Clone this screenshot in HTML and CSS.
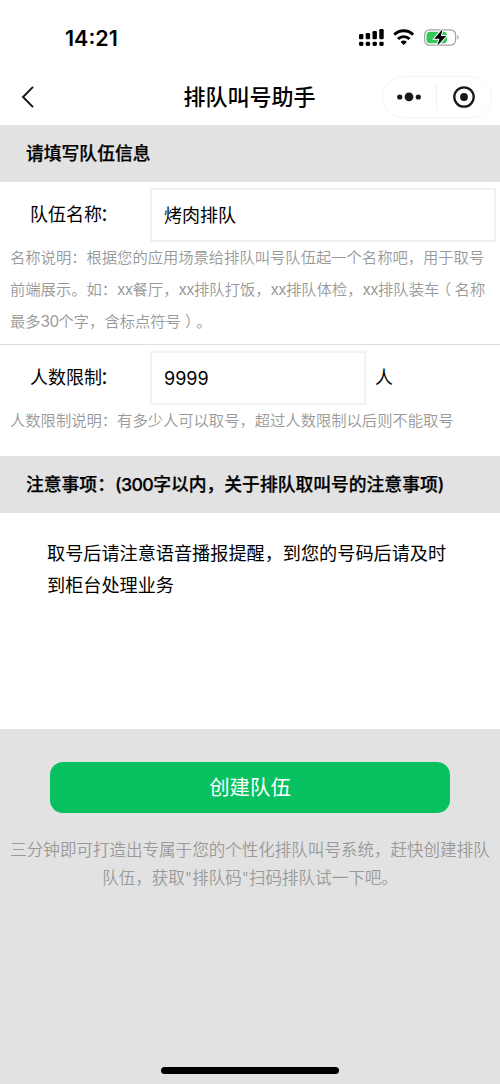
FILE: index.html
```html
<!DOCTYPE html>
<html lang="zh-CN">
<head>
<meta charset="utf-8">
<title>排队叫号助手</title>
<link rel="stylesheet" href="styles.css">
</head>
<body>
<div class="app">
  <header class="status-bar">
    <span class="clock">14:21</span>
    <svg class="status-icons" width="102" height="20" viewBox="0 0 102 20">
      <g fill="#000">
        <rect x="1" y="6" width="4.4" height="5.2" rx="1.3"/>
        <rect x="7.7" y="5" width="4.4" height="6.2" rx="1.3"/>
        <rect x="14.5" y="3" width="4.4" height="8.2" rx="1.3"/>
        <rect x="21.3" y="1" width="4.4" height="10.2" rx="1.3"/>
        <rect x="1" y="13.7" width="4.4" height="4.3" rx="1.4"/>
        <rect x="7.7" y="13.7" width="4.4" height="4.3" rx="1.4"/>
        <rect x="14.5" y="13.7" width="4.4" height="4.3" rx="1.4"/>
        <rect x="21.3" y="13.7" width="4.4" height="4.3" rx="1.4"/>
      </g>
      <g fill="none" stroke="#000" stroke-width="2.9">
        <path d="M36.3 6.6a13.3 13.3 0 0 1 18.800 0"/>
        <path d="M39.900 11a8.200 8.200 0 0 1 11.600 0"/>
      </g>
      <path d="M45.700 17l-3.100-3.100a4.400 4.400 0 0 1 6.200 0z" fill="#000"/>
      <rect x="66.600" y="1.800" width="31" height="15.400" rx="5" fill="#fff" stroke="#a3a3a3" stroke-width="1.200"/>
      <path d="M99.300 7v4.600c1.700-.7 1.700-3.900 0-4.600z" fill="#a3a3a3"/>
      <path d="M72 3.800h13.500a3.500 3.500 0 0 1 3.500 3.500v4.400a3.500 3.500 0 0 1-3.500 3.500H72a3.500 3.500 0 0 1-3.500-3.500V7.300A3.500 3.500 0 0 1 72 3.800z" fill="#34c759"/>
      <path d="M84.600.9L76.300 10.800h5.100l-2.200 7.300 9-10h-5.300z" fill="#000" stroke="#fff" stroke-width="2" paint-order="stroke"/>
    </svg>
  </header>

  <nav class="nav-bar">
    <svg class="back" width="14" height="24" viewBox="0 0 14 24"><path d="M12 1.800L2 12l10 10.200" fill="none" stroke="#111" stroke-width="1.900"/></svg>
    <h1 class="title">排队叫号助手</h1>
    <div class="capsule">
      <svg class="more" width="24" height="10" viewBox="0 0 24 10"><g fill="#191919"><circle cx="2.700" cy="5" r="2.600"/><circle cx="12" cy="4.800" r="4.400"/><circle cx="21.300" cy="5" r="2.600"/></g></svg>
      <span class="divider"></span>
      <svg class="close" width="24" height="24" viewBox="0 0 24 24"><circle cx="12" cy="12" r="9.700" fill="none" stroke="#191919" stroke-width="2.300"/><circle cx="12" cy="12" r="3.900" fill="#191919"/></svg>
    </div>
  </nav>

  <main>
    <h2 class="section-title">请填写队伍信息</h2>
    <section class="field field-name">
      <div class="row"><label class="label">队伍名称<span class="colon">：</span></label><div class="input">烤肉排队</div></div>
      <p class="hint"><span class="line">名称说明：根据您的应用场景给排队叫号队伍起一个名称吧，用于取号</span><span class="line">前端展示。如：<span class="latin">xx</span>餐厅，<span class="latin">xx</span>排队打饭，<span class="latin">xx</span>排队体检，<span class="latin">xx</span>排队装车<span class="open-paren">（</span>名称</span><span class="line">最多<span class="latin">30</span>个字，含标点符号<span class="close-paren">）</span>。</span></p>
    </section>
    <section class="field field-limit">
      <div class="row"><label class="label">人数限制<span class="colon">：</span></label><div class="input input-short">9999</div><span class="unit">人</span></div>
      <p class="hint"><span class="line">人数限制说明：有多少人可以取号，超过人数限制以后则不能取号</span></p>
    </section>
    <h2 class="section-title">注意事项：<span class="count">(300</span>字以内，关于排队取叫号的注意事项)</h2>
    <section class="notes">
      <span class="line">取号后请注意语音播报提醒，到您的号码后请及时</span><span class="line">到柜台处理业务</span>
    </section>
  </main>

  <footer class="footer">
    <button class="submit" type="button">创建队伍</button>
    <p class="promo"><span class="line">三分钟即可打造出专属于您的个性化排队叫号系统，赶快创建排队</span><span class="line">队伍，获取"排队码"扫码排队试一下吧。</span></p>
    <div class="home-indicator"></div>
  </footer>
</div>
</body>
</html>
```
FILE: styles.css
```css
* { box-sizing: border-box; }
body {
  margin: 0;
  background: #fff;
  color: #000;
  font-family: Inter, "Noto Sans CJK SC", sans-serif;
  text-spacing-trim: space-all;
}
h1, h2, p { margin: 0; }
.app { display: flex; flex-direction: column; width: 500px; height: 1084px; overflow: hidden; }
.line { display: block; white-space: nowrap; }

.status-bar { display: flex; justify-content: space-between; height: 69px; padding: 28px 40px 0 65px; }
.clock { font-size: 21.5px; font-weight: 600; line-height: 20px; }
.status-icons { display: block; }

.nav-bar { display: grid; grid-template-columns: 118px 1fr 118px; align-items: center; height: 56px; padding: 0 8px 0 7px; }
.back { margin-left: 14px; }
.title { font-size: 22px; font-weight: 500; line-height: 30px; text-align: center; }
.capsule { display: flex; align-items: center; justify-self: end; width: 110px; height: 42px; padding: 0 14px; border: 1px solid #f5f5f5; border-radius: 21px; }
.divider { width: 1px; height: 26px; margin: 0 15px 0 15px; background: #efefef; }
.more, .close { flex: none; }

.section-title { height: 57px; padding-left: 26px; background: #e2e2e2; font-size: 17.8px; font-weight: 500; line-height: 57px; white-space: nowrap; -webkit-text-stroke: 0.25px #000; }
.count { letter-spacing: -0.6px; }
.field { padding-top: 6px; }
.field-name { height: 163px; border-bottom: 1px solid #dedede; }
.field-limit { height: 111px; }
.row { display: flex; height: 54px; font-size: 18px; line-height: 54px; }
.label { width: 150px; padding-left: 30px; }
.colon { margin-left: -2px; }
.input { width: 346px; padding-left: 12px; border: 2px solid #f1f1f1; line-height: 52px; }
.input-short { width: 216px; }
.unit { padding-left: 9px; }
.hint { padding-left: 10px; color: #999; font-size: 15.3px; font-weight: 350; line-height: 32px; }
.latin { font-weight: 400; letter-spacing: -0.6px; }
.open-paren { margin: 0 3.5px 0 -3.5px; }
.close-paren { margin: 0 -4px 0 4px; }
.notes { height: 216px; padding: 24px 47px; font-size: 18.15px; line-height: 32px; }

.footer { display: flex; flex: 1; flex-direction: column; align-items: center; padding: 33px 0 10px; background: #e2e2e2; }
.submit { width: 400px; height: 51px; padding: 0; border: 0; border-radius: 13px; background: #07c160; color: #fff; font-family: inherit; font-size: 20.4px; line-height: 51px; }
.promo { margin-top: 23px; color: #999; font-size: 16.55px; font-weight: 350; line-height: 28px; text-align: center; }
.home-indicator { width: 178px; height: 7px; margin-top: auto; border-radius: 3.5px; background: #000; }
```
